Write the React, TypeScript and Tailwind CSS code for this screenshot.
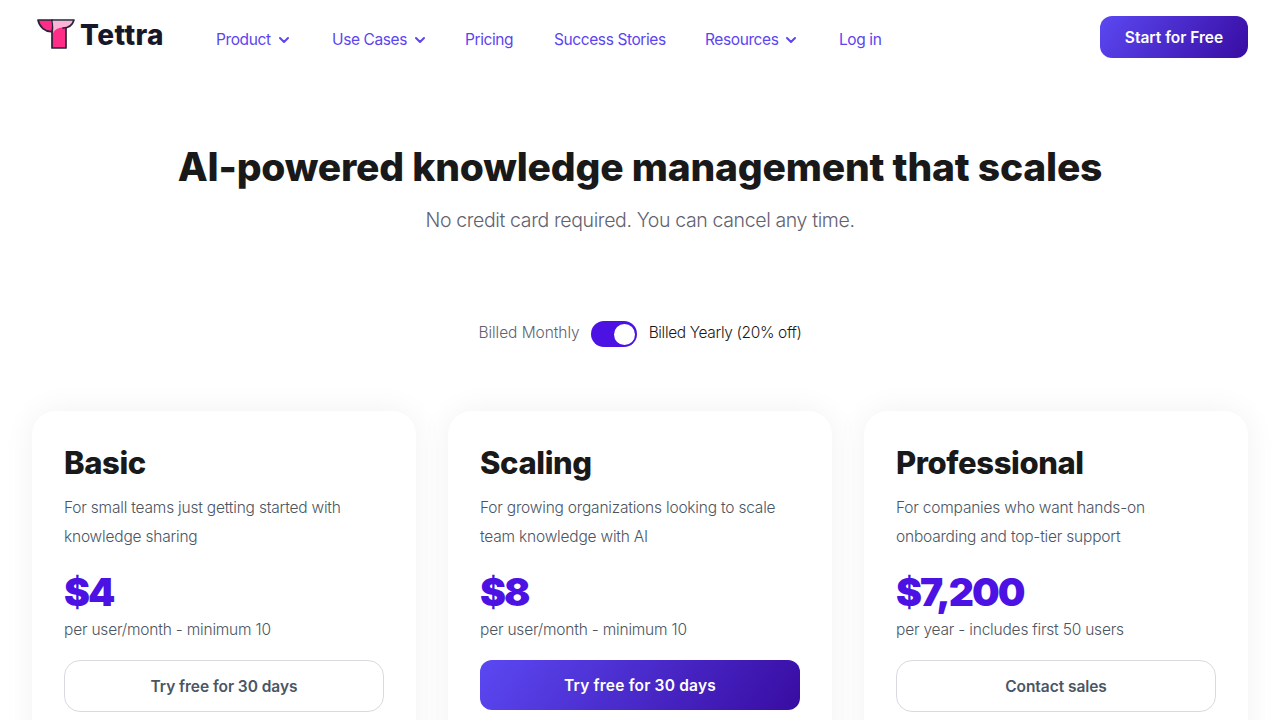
import { ChevronDown } from 'lucide-react'

const navItems = [
  { label: 'Product', menu: true, width: 'w-[116px]' },
  { label: 'Use Cases', menu: true, width: 'w-[133px]' },
  { label: 'Pricing', menu: false, width: 'w-[89px]' },
  { label: 'Success Stories', menu: false, width: 'w-[151px]' },
  { label: 'Resources', menu: true, width: 'w-[134px]' },
  { label: 'Log in', menu: false, width: 'w-auto' },
]

const plans = [
  {
    name: 'Basic',
    lines: ['For small teams just getting started with', 'knowledge sharing'],
    price: '$4',
    unit: 'per user/month - minimum 10',
    cta: 'Try free for 30 days',
    primary: false,
  },
  {
    name: 'Scaling',
    lines: ['For growing organizations looking to scale', 'team knowledge with AI'],
    price: '$8',
    unit: 'per user/month - minimum 10',
    cta: 'Try free for 30 days',
    primary: true,
  },
  {
    name: 'Professional',
    lines: ['For companies who want hands-on', 'onboarding and top-tier support'],
    price: '$7,200',
    unit: 'per year - includes first 50 users',
    cta: 'Contact sales',
    primary: false,
  },
]

function Logo() {
  return (
    <div className="flex items-center gap-[5px]">
      <svg width="38" height="30" viewBox="0 0 38 30" fill="none">
        {/* stem */}
        <path d="M15 8H29V29H15Z" fill="#FF2D87" stroke="#26233A" strokeWidth="1.7" strokeLinejoin="round" />
        {/* left wing */}
        <path d="M1 1H15C16 5 16 9 15 12.5C8 13 2.5 8 1 1Z" fill="#FF2D87" stroke="#26233A" strokeWidth="1.7" strokeLinejoin="round" />
        {/* right wing */}
        <path d="M15.5 2H36.5C35 6.5 31 8.8 26 8.8C21 8.8 17.5 10.5 16 14.5C16.5 10 16.5 6 15.5 2Z" fill="#FBB4D4" />
        <path d="M15 1H37C35.5 6 31.5 9 26 9" stroke="#26233A" strokeWidth="1.7" strokeLinecap="round" strokeLinejoin="round" />
      </svg>
      <span className="mt-[2px] text-[28px] leading-none font-extrabold tracking-[0.4px] text-[#17172b]">Tettra</span>
    </div>
  )
}

export default function App() {
  return (
    <div className="h-[720px] overflow-hidden bg-white font-['Inter',sans-serif]">
      {/* Header */}
      <header className="flex h-[74px] px-8">
        <div className="ml-[5px] mt-[19px] w-[179px]">
          <Logo />
        </div>
        <nav className="flex h-[22px] mt-[29px] items-center text-[15.5px] tracking-[-0.4px] text-[#5b45f0]">
          {navItems.map((item) => (
            <a key={item.label} className={`flex items-center gap-[5px] ${item.width}`}>
              {item.label}
              {item.menu && <ChevronDown className="w-[16px] h-[16px]" strokeWidth={3} />}
            </a>
          ))}
        </nav>
        <button className="ml-auto mt-4 h-[42px] w-[148px] rounded-[12px] bg-[linear-gradient(125deg,#5b48f2,#380ca2)] pt-[2px] text-[15.5px] font-semibold text-white">
          Start for Free
        </button>
      </header>

      {/* Hero */}
      <section className="pt-[68px] text-center">
        <h1 className="text-[39px] leading-[50px] font-extrabold tracking-[-0.2px] text-[#191919]">
          AI-powered knowledge management that scales
        </h1>
        <p className="mt-[14px] text-[19.5px] leading-[28px] font-light tracking-[-0.37px] text-[#62626f]">
          No credit card required. You can cancel any time.
        </p>
      </section>

      {/* Billing toggle */}
      <div className="mt-[87px] flex items-center justify-center text-[15.5px] leading-[26px] font-light">
        <span className="-mt-[2px] tracking-[-0.05px] text-[#62626f]">Billed Monthly</span>
        <div className="ml-[11px] mr-3 flex h-[26px] w-[46px] items-center justify-end rounded-full bg-[#4b12e3] pr-[2px]">
          <div className="h-[21px] w-[21px] rounded-full bg-white" />
        </div>
        <span className="-mt-[2px] tracking-[-0.35px] text-[#191919]">Billed Yearly (20% off)</span>
      </div>

      {/* Plans */}
      <div className="mt-[64px] grid grid-cols-3 gap-8 px-8">
        {plans.map((plan) => (
          <div key={plan.name} className="h-[420px] rounded-[24px] bg-white px-8 pt-[32px] shadow-[0_0_32px_rgba(0,0,0,0.06)]">
            <h2 className="text-[31px] leading-[40px] font-extrabold tracking-[-0.4px] text-[#191919]">{plan.name}</h2>
            <p className="mt-[10px] text-[15.5px] leading-[29px] font-light tracking-[-0.2px] text-[#4b5563]">
              {plan.lines.map((line) => (
                <span key={line} className="block">{line}</span>
              ))}
            </p>
            <div className="mt-[16px] text-[39px] leading-[50px] font-black tracking-[-2px] text-[#4b12e3]">{plan.price}</div>
            <p className="mt-0 text-[15.5px] leading-[26px] font-light tracking-[-0.2px] text-[#4b5563]">{plan.unit}</p>
            {plan.primary ? (
              <button className="mt-[17px] h-[50px] w-full rounded-[12px] bg-[linear-gradient(125deg,#5b48f2,#380ca2)] pt-[2px] text-[15.5px] font-semibold tracking-[0.2px] text-white">
                {plan.cta}
              </button>
            ) : (
              <button className="mt-[17px] h-[52px] w-full rounded-[16px] border border-[#d8dadf] bg-white pt-px text-[15.5px] font-semibold tracking-[-0.05px] text-[#4b5563]">
                {plan.cta}
              </button>
            )}
          </div>
        ))}
      </div>
    </div>
  )
}
